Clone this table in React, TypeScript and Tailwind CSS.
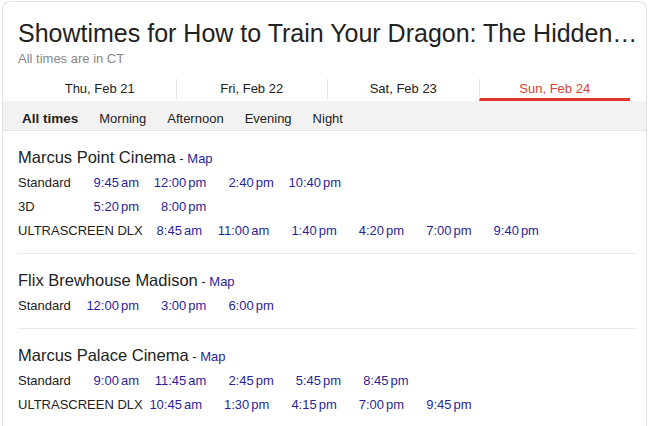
const dates = ['Thu, Feb 21', 'Fri, Feb 22', 'Sat, Feb 23', 'Sun, Feb 24'];
const filters = ['Morning', 'Afternoon', 'Evening', 'Night'];

type Row = { label: string; times: string[] };
type Theater = { name: string; rows: Row[] };

const theaters: Theater[] = [
  {
    name: 'Marcus Point Cinema',
    rows: [
      { label: 'Standard', times: ['9:45am', '12:00pm', '2:40pm', '10:40pm'] },
      { label: '3D', times: ['5:20pm', '8:00pm'] },
      { label: 'ULTRASCREEN DLX', times: ['8:45am', '11:00am', '1:40pm', '4:20pm', '7:00pm', '9:40pm'] },
    ],
  },
  {
    name: 'Flix Brewhouse Madison',
    rows: [{ label: 'Standard', times: ['12:00pm', '3:00pm', '6:00pm'] }],
  },
  {
    name: 'Marcus Palace Cinema',
    rows: [
      { label: 'Standard', times: ['9:00am', '11:45am', '2:45pm', '5:45pm', '8:45pm'] },
      { label: 'ULTRASCREEN DLX', times: ['10:45am', '1:30pm', '4:15pm', '7:00pm', '9:45pm'] },
    ],
  },
];

const Time = ({ value }: { value: string }) => {
  const clock = value.slice(0, -2);
  const suffix = value.slice(-2);
  return (
    <span className="w-[67.4px] shrink-0 text-right text-[#2b1f97]">
      {clock}
      <span className="ml-[2px]">{suffix}</span>
    </span>
  );
};

const App = () => {
  return (
    <div className="min-h-[426px] bg-white pl-[2px] pt-[1px] font-['Liberation_Sans',Arial,sans-serif] text-[#222]">
      <div className="w-[645px] min-h-[425px] rounded-t-[8px] border border-b-0 border-[#e2e2e2] overflow-hidden">
        {/* Header */}
        <div className="pl-[15px] pt-[16px]">
          <h1 className="text-[25px] leading-[30px] whitespace-nowrap">
            Showtimes for How to Train Your Dragon: The Hidden…
          </h1>
          <p className="mt-[3px] text-[13px] leading-4 text-[#878787]">All times are in CT</p>
        </div>

        {/* Date tabs */}
        <div className="mt-[12px] ml-[21px] w-[606px] grid grid-cols-4 text-[13px]">
          {dates.map((d, i) => (
            <div
              key={d}
              className={
                'h-[22px] flex items-center justify-center border-b-[3px] ' +
                (i > 0 ? 'border-l border-l-[#e6e6e6] ' : '') +
                (i === 3 ? 'border-b-[#e0362c] text-[#d9403a]' : 'border-b-transparent')
              }
            >
              {d}
            </div>
          ))}
        </div>

        {/* Time of day filter */}
        <div className="h-[30px] bg-[#f2f2f2] border-b border-[#e4e4e4] flex gap-[21px] pl-[19px] pt-[8px] text-[13px] leading-5">
          <span className="font-bold text-[13.5px]">All times</span>
          {filters.map((f) => (
            <span key={f}>{f}</span>
          ))}
        </div>

        {/* Theaters */}
        <div className="pl-[15px] pr-[9px]">
          {theaters.map((t, i) => (
            <div
              key={t.name}
              className={'pt-[14px] pb-[10px] ' + (i < theaters.length - 1 ? 'border-b border-[#ebebeb]' : '')}
            >
              <div className="h-6 leading-6 whitespace-nowrap">
                <span className="text-[16.5px]">{t.name}</span>
                <span className="text-[13px]">
                  {' - '}
                  <span className="text-[#2b1f97]">Map</span>
                </span>
              </div>
              <div className="mt-[2px]">
                {t.rows.map((r) => (
                  <div key={r.label} className="h-6 flex items-center text-[13px] whitespace-nowrap">
                    <span className={r.label.length > 10 ? 'w-[116.6px] shrink-0' : 'w-[53.6px] shrink-0'}>
                      {r.label}
                    </span>
                    {r.times.map((tm) => (
                      <Time key={tm} value={tm} />
                    ))}
                  </div>
                ))}
              </div>
            </div>
          ))}
        </div>
      </div>
    </div>
  );
};

export default App;
